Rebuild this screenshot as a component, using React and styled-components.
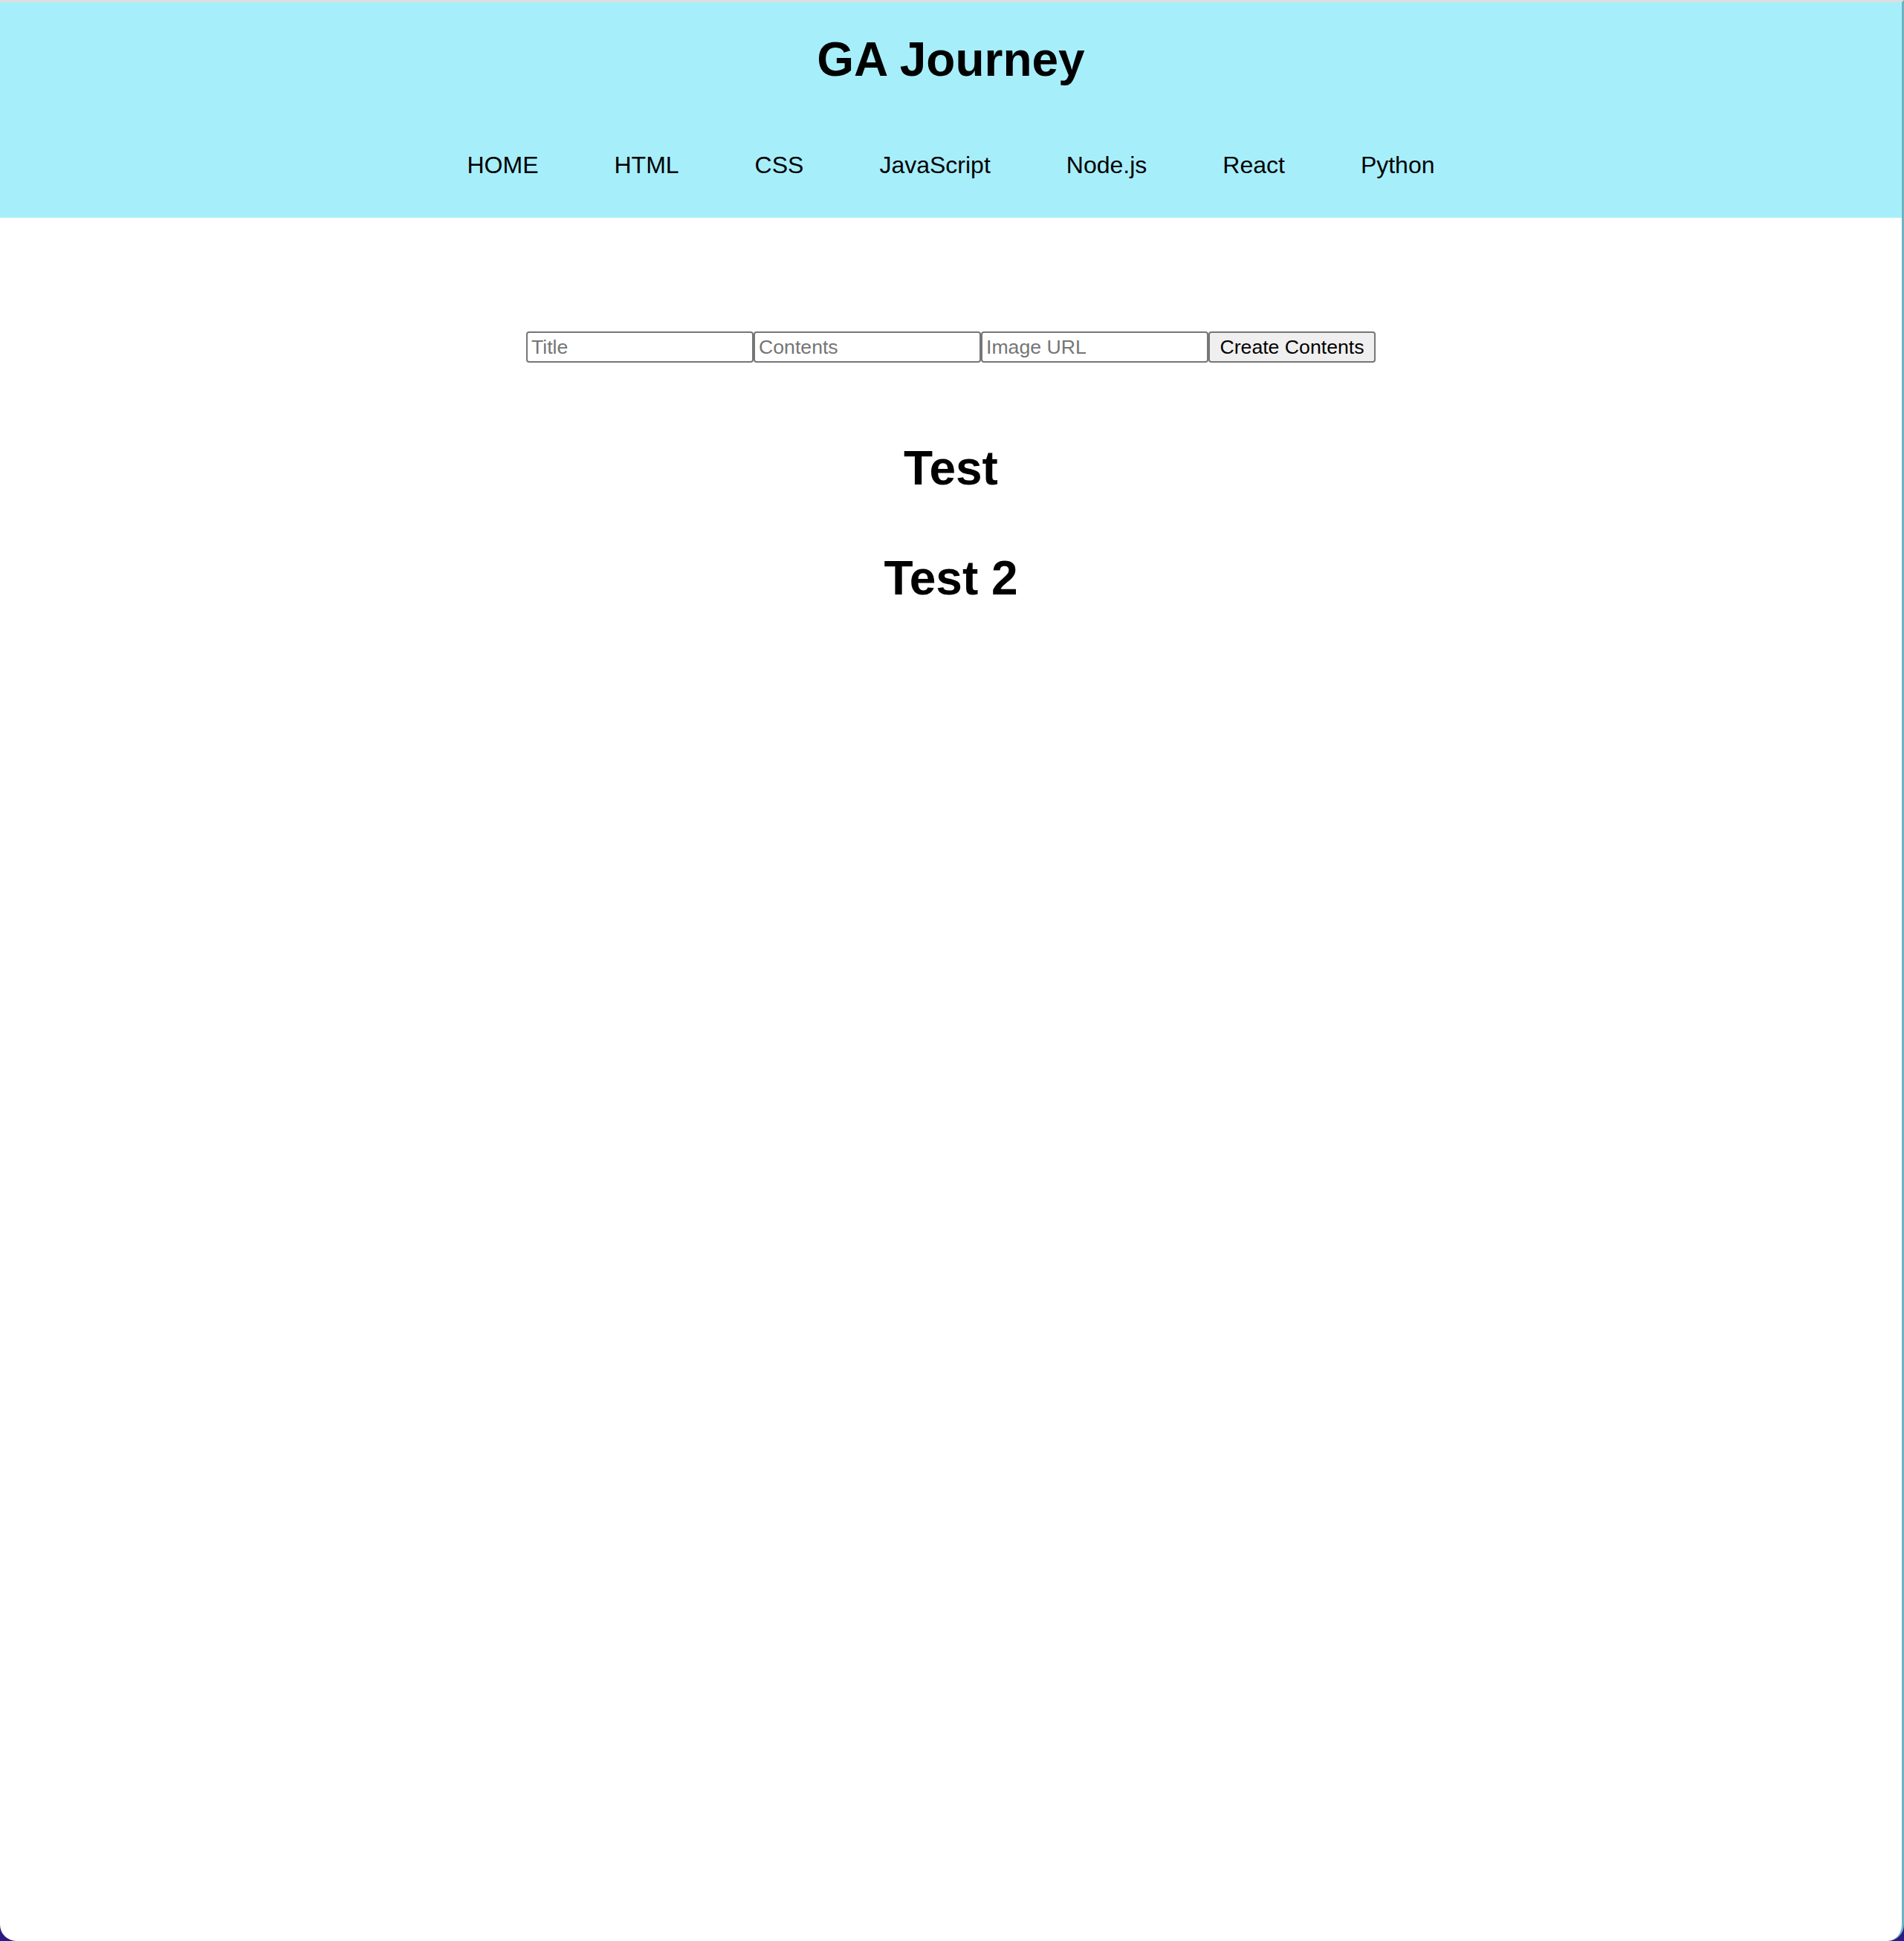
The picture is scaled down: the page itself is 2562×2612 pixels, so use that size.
import React from "react";
import styled, { createGlobalStyle } from "styled-components";

const GlobalStyle = createGlobalStyle`
  html, body {
    margin: 0;
    padding: 0;
    background: #2b1a85;
  }
  body {
    font-family: "Liberation Sans", Arial, Helvetica, sans-serif;
    color: #000;
  }
  #root {
    min-height: 2612px;
    display: flex;
  }
`;

const Window = styled.div`
  flex: 1;
  display: flex;
  flex-direction: column;
  min-height: 2612px;
  box-sizing: border-box;
  background: #ffffff;
  border-top: 3px solid #dedede;
  border-right: 3px solid #6db3c3;
  border-radius: 0 0 22px 22px;
  overflow: hidden;
`;

const Header = styled.header`
  background: #a7eefb;
  padding: 40px 0 52px;
  display: flex;
  flex-direction: column;
  align-items: center;
`;

const SiteTitle = styled.h1`
  margin: 0;
  font-size: 64px;
  line-height: 74px;
  font-weight: 700;
  text-align: center;
`;

const Nav = styled.nav`
  margin-top: 87px;
  display: flex;
  justify-content: center;
  gap: 102px;
`;

const NavLink = styled.a`
  font-size: 32px;
  line-height: 37px;
  color: #000;
  text-decoration: none;
  cursor: pointer;
`;

const Main = styled.main`
  padding-top: 153px;
  display: flex;
  flex-direction: column;
  align-items: center;
`;

const Form = styled.form`
  display: flex;
  align-items: stretch;
`;

const Field = styled.input`
  box-sizing: border-box;
  width: 306px;
  height: 42px;
  margin: 0;
  padding: 2px 5px;
  border: 2px solid #767676;
  border-radius: 4px;
  background: #fff;
  font-family: "Liberation Sans", Arial, sans-serif;
  font-size: 26.67px;
  color: #000;
  outline: none;
  &::placeholder {
    color: #757575;
  }
`;

const SubmitButton = styled.button`
  box-sizing: border-box;
  width: 225px;
  height: 42px;
  margin: 0;
  padding: 2px 12px;
  border: 2px solid #767676;
  border-radius: 4px;
  background: #efefef;
  font-family: "Liberation Sans", Arial, sans-serif;
  font-size: 26.67px;
  color: #000;
  white-space: nowrap;
  cursor: pointer;
`;

const PostList = styled.section`
  margin-top: 105px;
  display: flex;
  flex-direction: column;
  align-items: center;
  gap: 74px;
`;

const PostTitle = styled.h1`
  margin: 0;
  font-size: 64px;
  line-height: 74px;
  font-weight: 700;
  text-align: center;
`;

const links = ["HOME", "HTML", "CSS", "JavaScript", "Node.js", "React", "Python"];
const posts = [{ id: 1, title: "Test" }, { id: 2, title: "Test 2" }];

export default function App() {
  return (
    <>
      <GlobalStyle />
      <Window>
        <Header>
          <SiteTitle>GA Journey</SiteTitle>
          <Nav>
            {links.map((l) => (
              <NavLink key={l}>{l}</NavLink>
            ))}
          </Nav>
        </Header>
        <Main>
          <Form onSubmit={(e) => e.preventDefault()}>
            <Field type="text" placeholder="Title" />
            <Field type="text" placeholder="Contents" />
            <Field type="text" placeholder="Image URL" />
            <SubmitButton type="submit">Create Contents</SubmitButton>
          </Form>
          <PostList>
            {posts.map((p) => (
              <PostTitle key={p.id}>{p.title}</PostTitle>
            ))}
          </PostList>
        </Main>
      </Window>
    </>
  );
}
